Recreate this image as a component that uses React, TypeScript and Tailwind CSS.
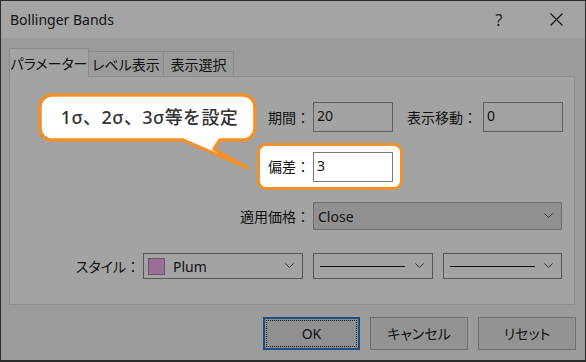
const font = "[font-family:'Noto_Sans','Noto_Sans_CJK_JP',sans-serif]";
const palt = "[font-feature-settings:'palt']";

function Chevron({ className = '' }: { className?: string }) {
  return (
    <svg width="9" height="6" viewBox="0 0 9 6" className={className}>
      <polyline points="0.5,0.5 4.5,4.5 8.5,0.5" fill="none" stroke="#333" strokeWidth="1" />
    </svg>
  );
}

function Callout() {
  return (
    <div className="absolute left-[38px] top-[93px] w-[220px] h-[79px]">
      <svg width="220" height="79" viewBox="0 0 220 79" className="absolute inset-0">
        <path
          d="M 14 2 H 205 A 12 12 0 0 1 217 14 V 35 A 12 12 0 0 1 205 47 H 182 L 176 56 L 210 75 L 145 47 H 14 A 12 12 0 0 1 2 35 V 14 A 12 12 0 0 1 14 2 Z"
          fill="#ffffff"
          stroke="#ef922d"
          strokeWidth="3.5"
          strokeLinejoin="round"
        />
      </svg>
      <div className="absolute left-[4px] top-[2px] w-[215px] h-[45px] flex items-center justify-center text-[18px] font-medium text-[#333] tracking-[0.4px]">
        1σ、2σ、3σ等を設定
      </div>
    </div>
  );
}

export default function App() {
  return (
    <div className={`relative w-[586px] h-[362px] bg-[#2b2b2b] pt-[1px] pl-[1px] text-[14px] text-[#111] ${font}`}>
      <div className="w-[584px] h-[359px] bg-[#9b9b9b] flex flex-col">

        {/* タイトルバー */}
        <div className="h-[37px] bg-[#a4a4a4] flex items-center pl-[9px]">
          <span className="text-[14px] text-[#111]">Bollinger Bands</span>
          <span className="ml-auto w-[46px] text-center text-[16px] text-[#222]">?</span>
          <span className="ml-[11px] mr-[6px] w-[46px] flex justify-center">
            <svg width="13" height="13" viewBox="0 0 13 13">
              <path d="M0.5 0.5 L12.5 12.5 M12.5 0.5 L0.5 12.5" stroke="#111" strokeWidth="1.1" />
            </svg>
          </span>
        </div>

        {/* タブ */}
        <div className="pl-[8px] pr-[10px] pt-[10px]">
          <div className={`flex items-end h-[29px] ${palt}`}>
            <div className="relative z-10 h-[29px] w-[80px] bg-[#a3a3a3] border border-b-0 border-[#8a8a8a] flex items-center justify-center">
              パラメーター
            </div>
            <div className="h-[25px] mb-[1px] w-[75px] border border-l-0 border-b-0 border-[#8a8a8a] flex items-center justify-center">
              レベル表示
            </div>
            <div className="h-[25px] mb-[1px] w-[70px] border border-l-0 border-b-0 border-[#8a8a8a] flex items-center justify-center">
              表示選択
            </div>
          </div>

          {/* パネル */}
          <div className="-mt-[1px] h-[229px] bg-[#a3a3a3] border border-[#8c8c8c] pt-[25px]">
            <div className="flex items-center h-[30px]">
              <span className="w-[303px] text-right pr-[3px]">期間：</span>
              <div className="w-[80px] h-[30px] border border-[#606060] px-[3px] leading-[26px]">20</div>
              <span className="ml-[14px] w-[70px] text-right">表示移動：</span>
              <div className="ml-[6px] w-[80px] h-[30px] border border-[#606060] px-[3px] leading-[26px]">0</div>
            </div>

            <div className="mt-[11px] ml-[247px] w-[146px] h-[47px] border-[3px] border-[#ef922d] rounded-[9px] bg-white flex items-center">
              <span className="w-[53px] text-right pr-[3px]">偏差：</span>
              <div className="w-[80px] h-[30px] border border-[#7a7a7a] bg-white px-[3px] leading-[26px]">3</div>
            </div>

            <div className="mt-[12px] flex items-center h-[28px]">
              <span className="w-[303px] text-right pr-[3px]">適用価格：</span>
              <div className="w-[249px] h-[28px] bg-[#909090] border border-[#6e6e6e] flex items-center pl-[4px] pr-[8px]">
                <span>Close</span>
                <Chevron className="ml-auto" />
              </div>
            </div>

            <div className="mt-[23px] flex items-center h-[26px]">
              <span className="w-[133px] text-right pr-[3px]">
                <span className={palt}>スタイル</span>：
              </span>
              <div className="w-[160px] h-[26px] border border-[#575757] flex items-center pl-[4px] pr-[8px]">
                <span className="w-[17px] h-[17px] bg-[#9b6e98] border border-[#6a5668]" />
                <span className="ml-[8px]">Plum</span>
                <Chevron className="ml-auto" />
              </div>
              <div className="ml-[10px] w-[120px] h-[26px] border border-[#575757] flex items-center pl-[6px] pr-[8px]">
                <span className="w-[85px] h-[1px] bg-[#111]" />
                <Chevron className="ml-auto" />
              </div>
              <div className="ml-[10px] w-[119px] h-[26px] border border-[#575757] flex items-center pl-[6px] pr-[8px]">
                <span className="w-[85px] h-[1px] bg-[#111]" />
                <Chevron className="ml-auto" />
              </div>
            </div>
          </div>
        </div>

        {/* ボタン */}
        <div className={`mt-[12px] flex justify-end gap-[10px] pr-[9px] ${palt}`}>
          <button className="relative w-[97px] h-[33px] bg-[#909090] border-2 border-[#1e4f82] flex items-center justify-center">
            <span className="absolute inset-[1px] border border-dotted border-[#111]" />
            OK
          </button>
          <button className="w-[98px] h-[33px] bg-[#939393] border border-[#6f6f6f] flex items-center justify-center">
            キャンセル
          </button>
          <button className="w-[98px] h-[33px] bg-[#939393] border border-[#6f6f6f] flex items-center justify-center">
            リセット
          </button>
        </div>
      </div>

      <Callout />
    </div>
  );
}
